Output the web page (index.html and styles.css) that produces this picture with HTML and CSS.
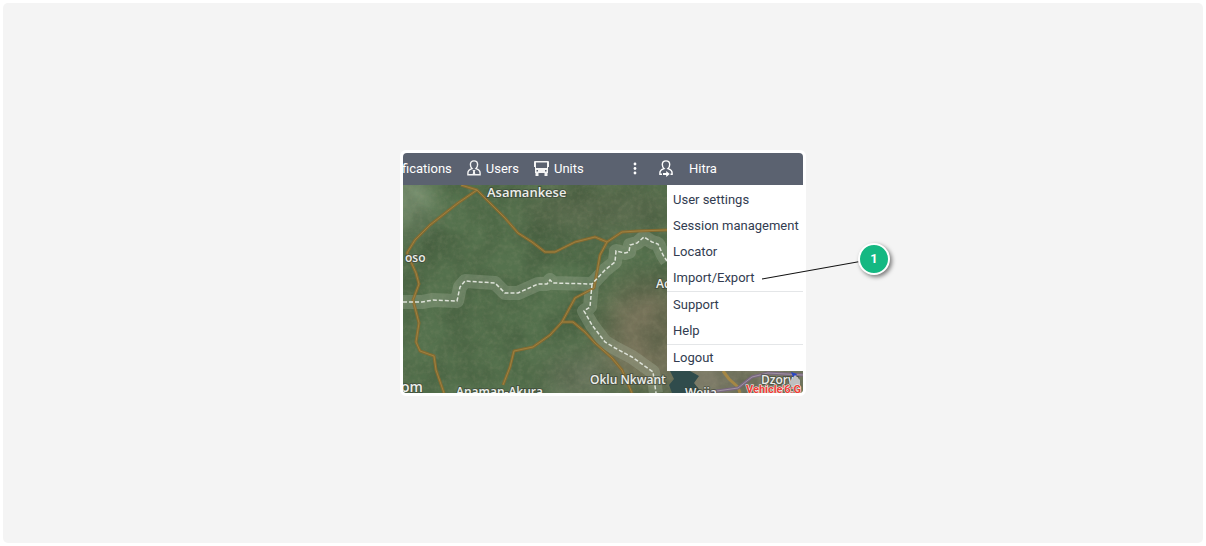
FILE: index.html
```html
<!DOCTYPE html>
<html lang="en">
<head>
    <meta charset="UTF-8">
    <meta name="viewport" content="width=device-width, initial-scale=1.0">
    <title>Import/Export</title>
    <link rel="stylesheet" href="styles.css">
</head>
<body>
    <main class="stage">
        <div class="card">
            <div class="app">
                <header class="toolbar">
                    <nav class="tabs">
                        <button class="tab" type="button">fications</button>
                        <button class="tab" type="button">
                            <svg width="14" height="16" viewBox="0 0 14 16" fill="none" stroke="#f4f4f4" stroke-width="1.4">
                                <path d="M7 .9C4.600.9 3.400 2.500 3.400 4.600c0 1.700.6 3.100 1.600 4C2.300 9.400.9 10.800.9 13v1.800h12.200V13c0-2.200-1.400-3.600-4.100-4.400 1-.9 1.600-2.300 1.600-4C10.600 2.500 9.400.9 7 .9z"/>
                                <path d="M5.500 10h3l-.7 1.500.6 3H5.600l.6-3z" fill="#f4f4f4" stroke="none"/>
                            </svg>
                            Users
                        </button>
                        <button class="tab" type="button">
                            <svg width="15" height="15" viewBox="0 0 15 15">
                                <path fill="#f4f4f4" fill-rule="evenodd" d="M1 0h13a1 1 0 0 1 1 1v5h-1v6h-.5v3h-3v-3h-6v3h-3v-3H1V6H0V1a1 1 0 0 1 1-1zM2 1.500V7h11V1.500zM2.500 9v1.500H4V9zM11 9v1.500h1.500V9z"/>
                            </svg>
                            Units
                        </button>
                    </nav>
                    <button class="more" type="button" aria-label="More">
                        <svg width="4" height="13" viewBox="0 0 4 13" fill="#fff">
                            <circle cx="2" cy="2" r="1.400"/>
                            <circle cx="2" cy="6.500" r="1.400"/>
                            <circle cx="2" cy="11" r="1.400"/>
                        </svg>
                    </button>
                    <button class="account" type="button">
                        <svg width="14" height="17" viewBox="0 0 14 17" fill="none" stroke="#fff" stroke-width="1.400">
                            <path d="M3 14.300H.9V13c0-2.200 1.400-3.600 4.100-4.400-1.100-.9-1.700-2.300-1.700-4C3.300 2.500 4.600.9 7 .9s3.700 1.600 3.700 3.700c0 1.700-.6 3.100-1.700 4 2.700.8 4.100 2.200 4.100 4.400v1.300H11.500"/>
                            <path d="M4 13h3.200v-2l3.600 3-3.600 3v-2H4z" fill="#fff" stroke="none"/>
                        </svg>
                        Hitra
                    </button>
                </header>
                <div class="map">
                    <svg class="terrain" viewBox="0 0 400 208" preserveAspectRatio="xMidYMid slice">
                        <defs>
                            <filter id="grain" x="0" y="0" width="100%" height="100%" color-interpolation-filters="sRGB">
                                <feTurbulence type="fractalNoise" baseFrequency="0.2" numOctaves="3" seed="8"/>
                                <feColorMatrix values="0 0 0 0 0.6  0 0 0 0 0.6  0 0 0 0 0.48  1 0 0 0 -0.4"/>
                            </filter>
                            <filter id="shade" x="0" y="0" width="100%" height="100%" color-interpolation-filters="sRGB">
                                <feTurbulence type="fractalNoise" baseFrequency="0.025" numOctaves="5" seed="3"/>
                                <feColorMatrix values="0 0 0 0 0.2  0 0 0 0 0.28  0 0 0 0 0.18  1.6 0 0 0 -0.6"/>
                            </filter>
                            <filter id="soft" x="-50%" y="-50%" width="200%" height="200%" color-interpolation-filters="sRGB">
                                <feGaussianBlur stdDeviation="14"/>
                            </filter>
                            <path id="roads" d="M58 0l16 5-19 13-28 22-15 15-8 13 9 20 3 11-6 16 6 23-3 19 4 9 14 5 2 14 8 23M74 5l28 28 13 15 14 9 13 10h10l20-10 20-5 12 5 15-10 16-1 29-1M204 57l-7 13-3 17-3 16-19 10-13 24-12 13-17 12-19 4-4 16-7 18M159 137h11l12 10 10 11 17 15 10 12 10 23"/>
                            <path id="border" d="M0 117h19l11-2 24 1 3-14 5-6 30 2 10 10h13l20-9h9l3-4 3 3 39 1 13-14 10-8 1-11 9 2 4-1 1-7 7-2 7-6 8 5 6 2 5 11 4 6M189 99l-2 23-6 4 8 14 13 17 10 6 17 9 21 15 3 21"/>
                        </defs>
                        <rect width="400" height="208" fill="#55724e"/>
                        <g filter="url(#soft)">
                            <ellipse cx="8" cy="12" rx="16" ry="40" fill="#8aa081"/>
                            <ellipse cx="245" cy="150" rx="45" ry="55" fill="#77735a"/>
                            <ellipse cx="178" cy="195" rx="35" ry="25" fill="#6a765e"/>
                            <ellipse cx="200" cy="25" rx="80" ry="25" fill="#5a6b4e"/>
                            <ellipse cx="340" cy="195" rx="80" ry="30" fill="#7f7b69"/>
                        </g>
                        <rect width="400" height="208" filter="url(#shade)" opacity=".5"/>
                        <rect width="400" height="208" filter="url(#grain)" opacity=".4"/>
                        <path d="M267 186h20l9 5-5 7 8 10h-30l-3-8 5-6z" fill="#304c4c"/>
                        <use href="#border" fill="none" stroke="#a9b5a0" stroke-opacity=".3" stroke-width="14" stroke-linejoin="round"/>
                        <use href="#roads" fill="none" stroke="#8c6a2c" stroke-opacity=".85" stroke-width="3" stroke-linejoin="round"/>
                        <use href="#roads" fill="none" stroke="#a58745" stroke-opacity=".8" stroke-width="1" stroke-linejoin="round"/>
                        <path d="M320 186l6 8 9 8 2 6" fill="none" stroke="#a58745" stroke-width="3"/>
                        <path d="M300 208l35-5 14-11 16-4 35 2" fill="none" stroke="#796680" stroke-width="3"/>
                        <path d="M300 208l35-5 14-11 16-4 35 2" fill="none" stroke="#a094a2" stroke-width="1"/>
                        <use href="#border" fill="none" stroke="#dde2d8" stroke-width="1.500" stroke-dasharray="4 2"/>
                        <g class="places">
                            <text class="town" x="84" y="12">Asamankese</text>
                            <text x="2" y="77">oso</text>
                            <text x="253" y="103">Ac</text>
                            <text x="187" y="199">Oklu Nkwant</text>
                            <text x="53" y="211">Anaman-Akura</text>
                            <text x="282" y="212">Weija</text>
                            <text x="358" y="199">Dzorw</text>
                            <text class="city" x="-2" y="207">om</text>
                        </g>
                        <path d="M388 187l6 2-3 5z" fill="#2746c4"/>
                        <path d="M392 190l5 5v7h-8l-3-4z" fill="#bfc0c0"/>
                        <text class="vehicle" x="343" y="208">Vehicle'6;G</text>
                    </svg>
                    <nav class="menu">
                        <a href="#">User settings</a>
                        <a href="#">Session management</a>
                        <a href="#">Locator</a>
                        <a href="#">Import/Export</a>
                        <a class="divided" href="#">Support</a>
                        <a href="#">Help</a>
                        <a class="divided" href="#">Logout</a>
                    </nav>
                </div>
            </div>
            <svg class="pointer" width="98" height="20" viewBox="0 0 98 20">
                <path d="M0 19L98 1.500" stroke="#111" stroke-width="1.200"/>
            </svg>
            <span class="badge">1</span>
        </div>
    </main>
</body>
</html>
```
FILE: styles.css
```css
* {
    box-sizing: border-box;
}
body {
    margin: 0;
    padding: 3px;
    min-height: 100vh;
    display: flex;
    background: #fff;
    font-family: Roboto, Arial, sans-serif;
    font-size: 13px;
}
.stage {
    flex: 1;
    display: flex;
    align-items: center;
    justify-content: center;
    background: #f4f4f4;
    border-radius: 5px;
}
.card {
    position: relative;
    width: 100%;
    max-width: 406px;
    border: 3px solid #fff;
    border-radius: 6px;
    background: #fff;
}
.app {
    overflow: hidden;
    border-radius: 4px;
}
.toolbar {
    display: flex;
    align-items: center;
    height: 32px;
    padding-bottom: 2px;
    background: #5b6270;
}
.toolbar button {
    display: flex;
    align-items: center;
    padding: 0;
    border: none;
    background: none;
    color: #fff;
    font: inherit;
    cursor: pointer;
}
.toolbar svg {
    flex: none;
}
.tabs {
    display: flex;
    flex: 1;
    gap: 15px;
    margin-left: -1px;
}
.toolbar .tab {
    gap: 5px;
}
.toolbar .account {
    width: 144px;
    margin-left: 22px;
    gap: 16px;
}
.map {
    display: flex;
    position: relative;
    min-height: 208px;
}
.terrain {
    display: block;
    width: 100%;
}
.places text {
    font-family: "Open Sans", sans-serif;
    font-size: 12px;
    font-weight: 600;
    fill: #ecedea;
    stroke: #3a4237;
    stroke-width: 2px;
    stroke-opacity: .6;
    paint-order: stroke;
}
.places .town {
    font-size: 13px;
}
.places .city {
    font-size: 14px;
}
.vehicle {
    font-size: 11px;
    font-weight: 700;
    fill: #ee3c36;
    stroke: #fff;
    stroke-width: 1px;
    paint-order: stroke;
}
.menu {
    position: absolute;
    top: 0;
    right: 0;
    width: 136px;
    padding-top: 2px;
    background: #fff;
}
.menu a {
    display: block;
    padding-left: 6px;
    line-height: 26px;
    color: #323c50;
    text-decoration: none;
    white-space: nowrap;
}
.menu .divided {
    border-top: 1px solid #e4e6e8;
}
.pointer {
    position: absolute;
    left: 359px;
    top: 107px;
}
.badge {
    position: absolute;
    left: 455px;
    top: 90px;
    width: 32px;
    height: 32px;
    border: 2px solid #fff;
    border-radius: 50%;
    background: #14b882;
    color: #fff;
    font-weight: 700;
    line-height: 28px;
    text-align: center;
    box-shadow: 2px 2px 4px rgba(0, 0, 0, 0.5);
}
```
